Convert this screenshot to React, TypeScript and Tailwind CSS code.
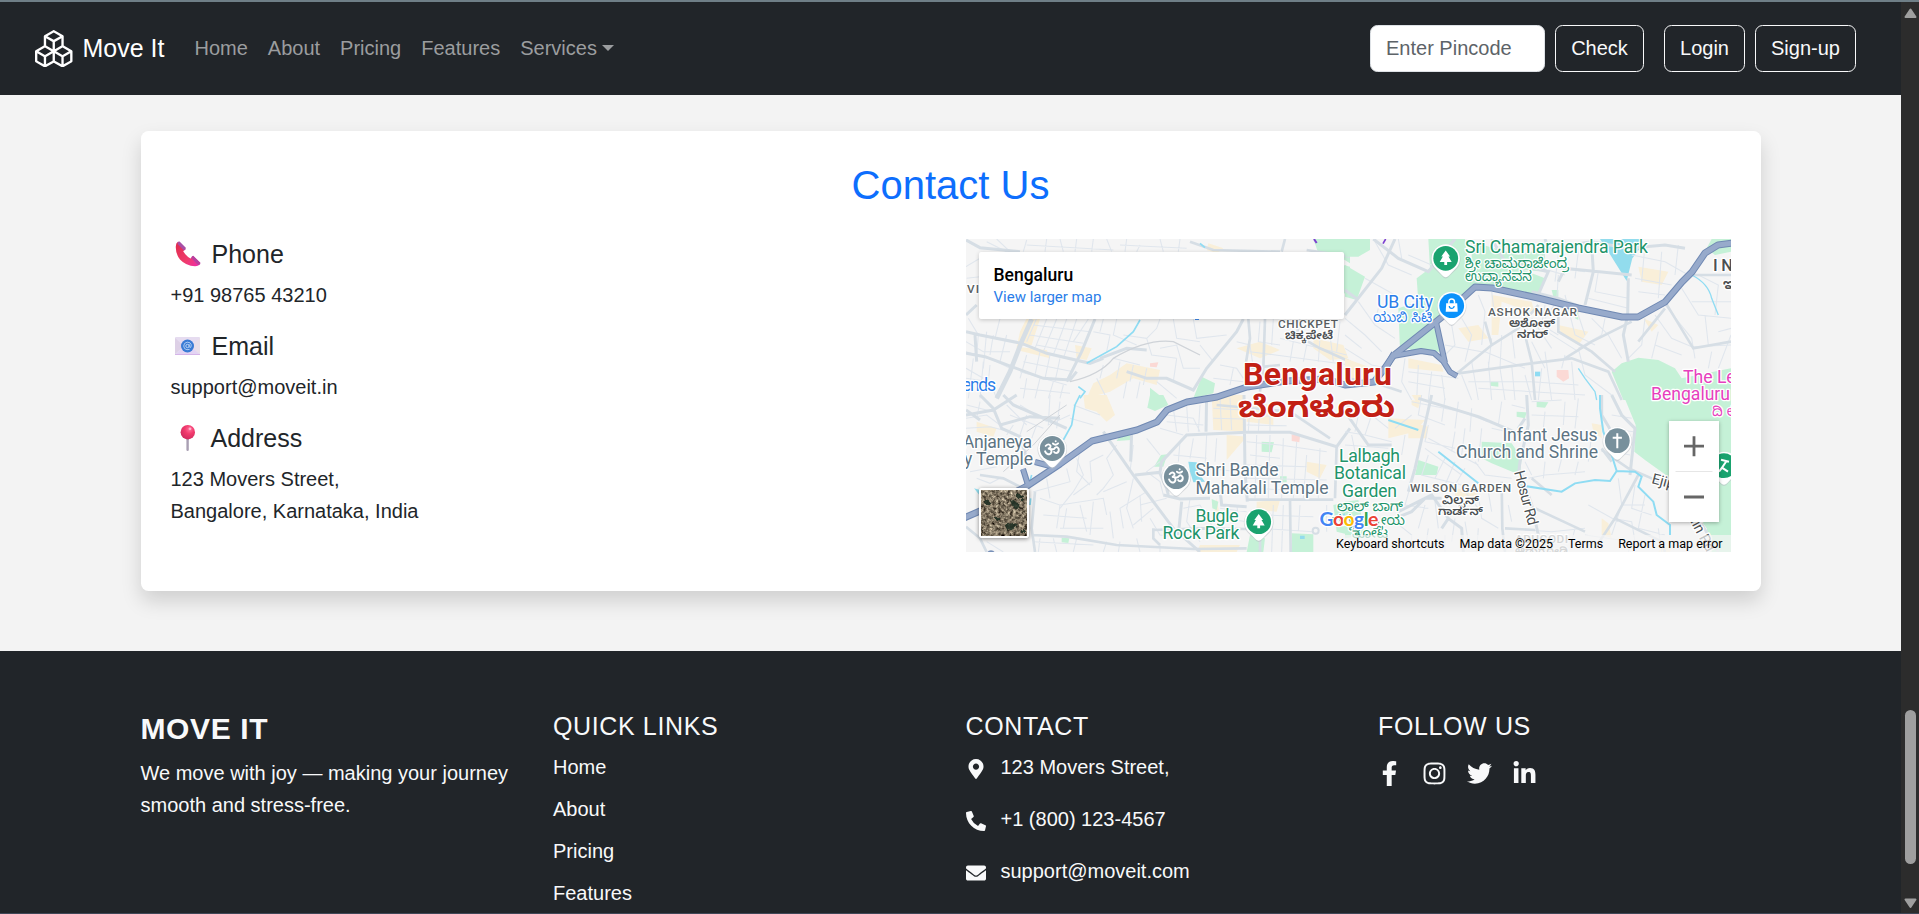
import React from "react";
import { BsBoxes } from "react-icons/bs";
import { FaMapMarkerAlt, FaPhoneAlt, FaEnvelope, FaFacebookF, FaInstagram, FaTwitter, FaLinkedinIn } from "react-icons/fa";

const navLinks = ["Home", "About", "Pricing", "Features"];
const quickLinks = ["Home", "About", "Pricing", "Features"];

const KN = '"Noto Sans Kannada", "Noto Sans", sans-serif';

function NavButton({ children, className = "" }: { children: React.ReactNode; className?: string }) {
  return (
    <button className={`h-[47px] shrink-0 rounded-[7.5px] border border-[#f8f9fa] pb-0.5 text-xl leading-[30px] text-[#f8f9fa] ${className}`}>
      {children}
    </button>
  );
}

function Navbar() {
  return (
    <nav className="flex h-[93px] shrink-0 items-center bg-[#212529] pr-[45px] pl-[35px]">
      <a className="flex items-center text-[25px] leading-10 text-white">
        <BsBoxes className="mr-2.5 size-[37.5px]" />
        <span className="pb-0.5">Move It</span>
      </a>
      <div className="ml-[30px] flex gap-5 pb-0.5 text-xl leading-[30px] text-[#9b9d9f]">
        {navLinks.map((l) => (
          <a key={l}>{l}</a>
        ))}
        <a className="flex items-center">
          Services
          <span className="ml-[5px] border-x-[6px] border-t-[6px] border-x-transparent border-t-[#9b9d9f]" />
        </a>
      </div>
      <div className="ml-auto flex">
        <input
          className="mr-2.5 h-[47px] w-[175px] rounded-[7.5px] border border-[#dee2e6] bg-white px-[15px] text-xl placeholder:text-[#5d6368]"
          placeholder="Enter Pincode"
        />
        <NavButton className="mr-5 w-[89px]">Check</NavButton>
        <NavButton className="mr-2.5 w-[81px]">Login</NavButton>
        <NavButton className="w-[101px]">Sign-up</NavButton>
      </div>
    </nav>
  );
}

function PhoneEmoji() {
  return (
    <svg viewBox="0 0 26 26" className="ml-1 h-[26px] w-[26px]">
      <defs>
        <linearGradient id="ph" x1="0" y1="0" x2="1" y2="1">
          <stop offset="0" stopColor="#e02a4c" />
          <stop offset=".6" stopColor="#ef3c6c" />
          <stop offset="1" stopColor="#f02bb0" />
        </linearGradient>
      </defs>
      <path d="M3 .8 L10.5 8 L8.2 10.3 Q11 15 15.5 17.5 L18 15 L25.3 22 Q24 25.2 20 25.2 Q11 25 5 18.5 Q0.6 13 0.8 6 Q.6 2 3 .8Z" fill="url(#ph)" />
      <path d="M3 .8 L4.6 .6 L10.8 6.8 L10.5 8.6 L9 9.6 L2.6 3Z" fill="#a84fa6" />
      <path d="M17 15.2 L18.3 14.8 L25.4 21.8 L25 23.4 L23 24 L16.2 17Z" fill="#b8409f" />
    </svg>
  );
}

function EmailEmoji() {
  return (
    <svg viewBox="0 0 26 26" className="ml-1 h-[26px] w-[26px]">
      <rect x="0" y="4" width="25" height="18" rx="1" fill="#e6dcf0" />
      <path d="M0 5 L9 13 L0 21Z" fill="#ddd0e6" />
      <path d="M25 5 L16 13 L25 21Z" fill="#eadfe9" />
      <path d="M.5 21.4 L9 14 H16 L24.5 21.4Z" fill="#e3d3f3" />
      <rect x="0" y="21" width="25" height="1" fill="#d5b5e8" />
      <circle cx="12.5" cy="13" r="6.5" fill="#3a7bd5" />
      <circle cx="12.5" cy="13" r="1.7" fill="none" stroke="#b9d2f5" strokeWidth="1" />
      <path d="M14.2 11.2 V13.6 Q14.6 15 15.9 14.2 Q17 11.5 15 9.8 Q12 8.2 9.6 10.4 Q7.8 13 9.6 15.6 Q11.8 17.4 14.6 16.4" fill="none" stroke="#b9d2f5" strokeWidth=".9" />
    </svg>
  );
}

function PinEmoji() {
  return (
    <svg viewBox="0 0 26 26" className="ml-1 h-[26px] w-[26px]">
      <defs>
        <radialGradient id="pin" cx=".62" cy=".3" r=".8">
          <stop offset="0" stopColor="#ff6f9b" />
          <stop offset=".4" stopColor="#f23a6d" />
          <stop offset="1" stopColor="#c9285c" />
        </radialGradient>
      </defs>
      <rect x="11.4" y="13" width="2.4" height="13" rx="1.2" fill="#a99fb3" />
      <circle cx="12.8" cy="7.2" r="7.2" fill="url(#pin)" />
      <circle cx="15" cy="3.8" r="1.4" fill="#ffb3cb" />
    </svg>
  );
}

type LabelProps = {
  x: number;
  y: number;
  w?: number;
  size?: number;
  fill: string;
  weight?: number;
  kn?: boolean;
  rotate?: number;
  children: string;
};

function Label({ x, y, w, size = 17.6, fill, weight = 400, kn, rotate, children }: LabelProps) {
  return (
    <text
      x={x}
      y={y}
      textLength={w}
      lengthAdjust={kn ? "spacingAndGlyphs" : "spacing"}
      fontFamily={kn ? KN : "Roboto, sans-serif"}
      fontSize={size}
      fontWeight={weight}
      fill={fill}
      stroke="#ffffff"
      strokeWidth={2.6}
      strokeLinejoin="round"
      paintOrder="stroke"
      transform={rotate ? `rotate(${rotate} ${x} ${y})` : undefined}
    >
      {children}
    </text>
  );
}

function Pin({ x, y, color, children }: { x: number; y: number; color: string; children?: React.ReactNode }) {
  return (
    <g transform={`translate(${x} ${y})`}>
      <path d="M0 20.3 C-1 20.3 -3 19 -4.5 17 L-9.5 12.2 A14.8 14.8 0 1 1 9.5 12.2 L4.5 17 C3 19 1 20.3 0 20.3Z" fill="#b9bfc4" opacity=".55" />
      <path d="M0 19 C-1 19 -3 18 -4.5 16 L-9.2 11 A14.2 14.2 0 1 1 9.2 11 L4.5 16 C3 18 1 19 0 19Z" fill="#fff" />
      <circle r="12.4" fill={color} />
      {children}
    </g>
  );
}

const Tree = () => (
  <path d="M0 -7.8 L4.4 -1.8 H2.8 L6 3.8 H1.4 V6.6 H-1.4 V3.8 H-6 L-2.8 -1.8 H-4.4Z" fill="#fff" />
);

const Om = () => (
  <g fill="none" stroke="#fff" strokeWidth="1.9" strokeLinecap="round">
    <path d="M-6.6 -2.6 Q-3.5 -5.6 -1.8 -2.8 Q-1.4 -.4 -4.4 0 Q-.4 .2 -.8 3.4 Q-2 6.8 -5 5.4 Q-6.6 4.4 -7.2 2.8" />
    <path d="M-1 .6 Q1.4 1.4 2.6 -.6 Q4.8 -2.6 6.4 .4 Q7 4 4 4.6 Q2.4 4.6 1.8 3.4" />
    <path d="M.6 -5 Q3.2 -2.6 5.8 -5.2" />
    <path d="M3.4 -7.4 v.1" />
  </g>
);

const FINE = "#e0e6ed";
const ROAD = "#d6dee5";
const SAND = "#f9efd9";
const TRUNK =
  "M-2 279 L14 272 L61 247 L94 225 L126 202 L171 191 L191 183 L201 171 L221 163 L251 158 L281 148 L320 142 L360 140 L379 146 L408 143 L419 129 L427 117 L476 78 L509 48 L526 49 L572 59 L612 69 L656 78 L672 78 L699 63 L716 43 L726 33 L739 14 L752 6 L767 4";
const SPURS =
  "M427 117 L455 112 L468 114 L477 122 L484 133 L491 137 M470 83 L479 124 M69 223 L84 227 M57 230 L62 246 M419 131 L428 114";

function CityMap() {
  return (
    <svg viewBox="0 0 765 313" className="block h-[313px] w-[765px]">
      <rect width="765" height="313" fill="#f5f5f5" />

      {/* north-west */}
      <g transform="translate(-6 -4) scale(.33333)">
        <path d="M200 250 L240 252 L215 330 L170 335 L180 290Z M170 335 L260 345 L270 370 L170 345Z M345 330 L395 340 L380 375 L350 370Z M500 385 L600 405 L590 450 L520 430 L450 470 L380 490 L400 445 L450 420Z M745 25 L790 40 L770 55 L740 45Z M1060 310 L1150 330 L1165 370 L1110 375 L1060 340Z M830 340 L900 320 L960 345 L900 370Z" fill={SAND} />
        <path d="M570 385 L595 382 L590 397 L570 395Z" fill="#fbd9d5" />
        <path d="M570 458 L610 490 L570 490Z M725 425 L765 445 L760 475 L700 490Z M1060 12 L1170 12 L1170 85 L1130 60 L1075 55Z M1150 90 L1170 95 L1170 180 L1152 175Z" fill="#c5f1d7" />
        <g fill="none" stroke={FINE} strokeWidth="3.2">
          <path d="M18 95 L60 70 M20 130 L60 125 M80 20 L140 50 M110 12 L150 50 M200 15 L190 50 M260 12 L255 50 M300 12 L310 50 M350 12 L345 50 M400 12 L395 50 M440 12 L455 50 M200 30 L460 45 M500 12 L495 50 M540 30 L530 50 M600 12 L610 50 M660 12 L655 50 M480 30 L680 40" />
          <path d="M18 320 L70 350 L150 350 M18 350 L100 375 L150 400 M18 400 L70 430 M25 250 L55 300 L50 360 M80 290 L70 400 M100 300 L90 360 M120 250 L105 310 M140 300 L120 380 M18 430 L90 440 L110 490 M40 370 L25 490 M70 380 L60 490 M90 390 L85 440" />
          <path d="M230 250 L200 320 M260 252 L225 340 M290 252 L250 350 M320 252 L280 360 M350 252 L310 370 M385 252 L340 320 M220 270 L390 290 M210 300 L370 325 M230 330 L360 355 M200 360 L180 430 M240 350 L225 420 M270 360 L255 430 M300 370 L285 440 M190 380 L340 410 M180 410 L320 450 M200 430 L190 490 M240 430 L225 490 M280 440 L265 490 M310 450 L300 490 M180 460 L330 475" />
          <path d="M400 290 L450 300 L440 350 M430 252 L420 290 M470 252 L460 300 L530 330 M490 300 L560 310 L590 280 L600 252 M560 310 L575 360 L650 370 M640 252 L650 310 L720 320 M600 340 L650 330 L670 400 L720 400 M460 370 L540 390 M430 390 L420 430 M480 380 L470 430 M520 390 L510 440 M560 400 L550 450 M650 370 L640 440 M590 440 L650 490 M720 330 L760 380 M700 252 L710 310 L800 300" />
          <path d="M830 320 L870 330 L880 400 M780 390 L830 400 L850 430 M900 260 L895 320 L960 330 M940 252 L935 330 M1000 320 L990 380 M1040 330 L1030 380 M1080 310 L1075 380 M1110 300 L1120 380 M1140 260 L1130 350 M870 350 L1170 390 M960 310 L1160 360 M760 430 L850 440 M820 400 L810 450 M500 440 L490 490 M540 440 L530 490 M410 430 L440 490" />
        </g>
        <g fill="none" stroke={ROAD} strokeWidth="11">
          <path d="M215 252 L185 320 L150 410 L110 490" strokeWidth="14" />
          <path d="M18 15 L60 38 L130 45 L180 50 M405 252 L365 350 L320 440 M18 290 L60 300 L185 325 L260 355 L390 385 L430 370 M18 355 L75 365 L155 395 L250 430 L330 435 L350 410 M500 410 L560 430 L620 430 L700 465 L740 400 L830 290 L850 252 M45 300 L50 380 M18 240 L50 210 M420 370 L500 340 L560 345" strokeWidth="9" />
          <path d="M690 20 L760 45 L960 50 M975 12 L965 50 M865 252 L870 310 L855 400 M915 252 L910 400 L900 470 M1040 45 L1170 65 M1020 252 L1010 300 L1080 340 L1170 380 M860 400 L960 390" strokeWidth="8" />
        </g>
        <path d="M330 440 Q420 420 460 370 Q560 310 640 320 L720 360" fill="none" stroke="#cfd3d8" strokeWidth="4" />
        <path d="M380 385 L470 335 L520 290 L540 255 M720 25 L735 38 M355 455 L375 470 L360 490" fill="none" stroke="#8fdcf3" strokeWidth="5" />
        <path d="M705 252 h12" stroke="#1a73e8" strokeWidth="5" />
        <path d="M1062 12 L1070 24" stroke="#7b3fd0" strokeWidth="6" />
      </g>

      {/* north-east */}
      <g transform="translate(379 -4) scale(.33333)">
        <path d="M440 180 L560 200 L570 235 L470 200 L460 300 L440 300Z M340 280 L400 270 L430 310 L370 320Z M190 370 L290 390 L295 410 L190 400Z M640 270 L730 290 L700 330 L650 300Z M880 95 L970 110 L950 150 L890 140Z M895 250 L940 270 L920 290Z M0 370 L70 395 L60 440 L0 430Z" fill={SAND} />
        <path d="M215 130 L255 100 L250 12 L360 12 L370 90 L470 80 L600 130 L580 190 L450 160 L390 150 L290 240 L215 340 L165 345 L160 220 L220 200Z M0 12 L75 12 L75 45 L40 65 L0 65Z M0 90 L60 125 L35 195 L0 185Z M265 275 L300 350 L190 350Z M620 165 L640 165 L640 185 L625 185Z M690 220 L700 220 L700 255 L690 250Z M1085 40 L1100 12 L1158 12 L1158 50 L1110 60Z M800 410 L830 385 L880 368 L940 375 L990 400 L1010 430 L1158 400 L1158 495 L835 495Z M380 20 L520 60 L600 40 L600 110 L480 100 L380 90Z M435 440 L460 440 L460 455 L435 452Z" fill="#c5f1d7" />
        <path d="M765 12 L890 12 L885 40 L862 70 L845 138 L815 90 L790 50Z" fill="#92dced" />
        <path d="M635 405 L670 405 L672 430 L655 440 L635 425Z" fill="#fbd9d5" />
        <path d="M570 410 h16 v14 h-16Z" fill="#8fdcf3" />
        <g fill="none" stroke={FINE} strokeWidth="3.2">
          <path d="M0 250 L60 300 L110 350 M40 200 L90 270 L150 310 M0 300 L50 340 M0 340 L80 390 L130 400 M90 20 L130 90 L200 120 M160 12 L170 70 M190 60 L260 90 M20 210 L0 240 M60 130 L150 180 M100 220 L90 260" />
          <path d="M320 270 L330 330 L300 360 M350 250 L380 300 L360 380 M400 180 L420 230 L410 330 M440 170 L450 250 M300 330 L410 350 M440 310 L430 400 M470 300 L465 400 L480 495 M500 290 L510 370 M380 380 L400 495 M420 350 L540 400 M350 420 L380 495 M260 410 L250 495 M290 420 L300 495 M190 410 L340 430 M190 440 L300 460 M370 440 L560 440 M400 460 L560 470 M430 380 L440 495 M500 390 L510 495 M180 370 L170 440 L200 495 M220 390 L215 495" />
          <path d="M540 60 L530 140 M600 40 L590 100 L660 120 M640 60 L630 140 M700 50 L690 130 M560 90 L720 110 M760 110 L750 170 L850 190 M730 190 L850 220 M640 120 L635 200 L600 250 M660 180 L690 300 L750 330 M700 240 L720 300 M600 210 L590 270 L640 300 M560 250 L620 340 M590 280 L700 350 M740 250 L790 300 L830 370 M780 250 L770 300 L700 340 M560 320 L600 400 M600 350 L620 495 M660 360 L650 400 M700 340 L720 420 L800 480 M560 440 L700 450 M560 470 L720 480 M590 400 L580 495 M540 420 L560 495 M680 380 L690 495" />
          <path d="M860 60 L960 80 L1030 120 M900 30 L890 140 M950 50 L940 190 M870 130 L980 150 M880 170 L960 180 M1000 30 L990 120 M930 240 L980 310 L1040 335 L1158 330 M960 210 L1040 310 L1050 370 M900 250 L890 330 L850 370 M1010 160 L1060 240 L1158 250 M1060 120 L1120 150 L1110 240 M1040 200 L1158 200 M1080 240 L1090 330 M1120 290 L1158 280 M930 330 L1010 360 M940 290 L920 370 M1100 350 L1090 400 M1158 300 L1120 400" />
        </g>
        <g fill="none" stroke={ROAD} strokeWidth="9">
          <path d="M0 240 L110 100 L150 12 M0 165 L40 195 M85 12 L160 70 L250 110 L290 60 L330 12 M440 12 L480 80 L610 110 L575 190 M600 12 L610 40 L740 20 L850 40 L960 30 L1020 40 M740 30 L745 110 L720 210 M640 140 L660 100 L860 120 M850 130 L848 240 L835 300 L850 380" />
          <path d="M330 420 L440 330 L520 280 L580 210 M540 300 L560 380 L570 495 M340 415 L560 385 L680 370 L790 410 L830 495 M660 370 L740 320 L860 260 M640 240 L640 290 L740 350 L810 410 M880 320 L960 220 M960 200 L1045 340 L1158 320 M720 220 L640 190 L560 170 M1030 120 L1158 120 M420 260 L440 330 M0 430 L80 440 L170 470" strokeWidth="8" />
        </g>
        <path d="M1040 120 Q1090 145 1100 190 L1120 240 M700 400 L720 430 L750 470 L755 495" fill="none" stroke="#8fdcf3" strokeWidth="4" />
        <path d="M122 12 L114 26" stroke="#7b3fd0" strokeWidth="5" />
      </g>

      {/* south-west */}
      <g transform="translate(-6 156) scale(.33333)">
        <path d="M370 0 L440 0 L465 60 L440 80 L410 50 L375 40Z M755 0 L855 0 L855 110 L760 105Z M800 120 L860 125 L800 195Z M860 20 L940 30 L940 90 L860 80Z M1040 200 L1100 210 L1080 250 L1040 230Z M770 310 L780 370 L760 370Z M890 320 L960 315 L950 350 L890 345Z M720 450 L840 450 L830 471 L710 471Z M50 80 L110 100 L100 125 L50 110Z" fill={SAND} />
        <path d="M570 0 L610 0 L625 30 L585 48 L562 38Z M480 122 L515 120 L512 135 L470 138Z M603 180 L622 178 L610 215 L582 215Z M905 140 L942 142 L935 172 L905 170Z M755 312 L775 320 L770 345 L757 340Z M870 420 L915 430 L910 471 L860 471Z M995 415 L1060 418 L1060 471 L995 471Z M305 428 L328 430 L325 444 L305 442Z M960 244 L980 244 L980 262 L960 262Z M1120 330 L1170 320 L1170 420 L1130 410Z" fill="#c5f1d7" />
        <path d="M685 200 L710 202 L720 240 L735 260 L700 262 L690 230Z M42 280 L60 285 L58 300Z M1020 422 h14 v10 h-14Z" fill="#92dced" />
        <path d="M995 118 L1020 122 L1018 142 L995 138Z" fill="#fbd9d5" />
        <g fill="none" stroke={FINE} strokeWidth="3.2">
          <path d="M18 70 L80 60 L120 90 M18 100 L90 95 L150 110 M60 20 L50 70 M20 30 L100 50 M140 30 L200 90 M150 60 L250 100 M180 30 L260 80 M160 90 L140 120 M200 60 L180 120 M230 90 L215 130 M270 0 L265 90 L330 60 M300 20 L290 100 M340 30 L420 60 M330 70 L400 90 M120 250 L90 265 L50 250 M30 230 L110 215 M220 290 L330 260 L320 220 M260 250 L270 310 M350 190 L370 240 L340 290 L300 340" />
          <path d="M470 150 L440 190 L460 240 L430 280 L410 300 M520 150 L510 230 M560 130 L600 180 M430 180 L390 200 L395 260 L340 300 M360 160 L350 230 L390 270 M300 330 L430 310 L440 360 M320 340 L310 400 M360 330 L380 410 M430 290 L500 260 M520 250 L500 340 L520 400 M560 290 L480 340 L490 400 M400 320 L390 420 M450 350 L460 430 M240 310 L300 330 L290 400 M250 360 L380 370 M300 400 L430 400 M540 300 L545 380 M580 340 L520 390" />
          <path d="M620 60 L700 70 L720 110 M640 40 L650 110 M680 30 L685 110 M620 80 L730 90 M600 100 L670 120 M720 30 L715 110 M760 40 L850 45 M760 70 L850 72 M780 10 L785 105 M810 10 L815 105 M870 20 L865 110 M900 30 L895 110 M930 30 L930 110 M860 60 L960 65 M860 90 L980 92 M700 130 L690 190 M740 120 L735 220 L840 230 M770 130 L765 200 M640 180 L740 190 M660 140 L655 200 M860 140 L960 150 L1100 170 M870 180 L960 190 M890 120 L885 310 M930 120 L925 310 M970 130 L965 310 M1010 140 L1000 310 M860 210 L1040 215 M860 250 L1100 255 M860 280 L990 285 M1040 180 L1030 310 M1080 160 L1075 310" />
          <path d="M600 200 L560 230 L600 260 L610 300 M620 310 L540 330 M670 340 L720 330 L760 400 M690 310 L680 380 L720 440 M780 340 L860 350 M790 370 L860 380 M830 330 L835 360 M570 370 L600 420 L700 430 M440 440 L430 471 M480 440 L475 471 M530 430 L540 471 M600 450 L600 471 M940 330 L935 471 M970 330 L965 471 M900 400 L1060 410 M900 360 L1060 365 M1020 330 L1015 410 M1100 330 L1100 410 M240 430 L235 471 M280 430 L290 471 M350 430 L340 471 M220 440 L400 450 M80 440 L130 471" />
        </g>
        <g fill="none" stroke={ROAD} strokeWidth="9">
          <path d="M60 0 L100 40 L125 100 L180 125 L200 190 M18 60 L100 45 L170 0 M18 45 L60 75 M120 90 L210 65 L300 70 M130 0 L160 30 L230 60 L320 100 M430 110 L520 240 L640 400 L720 471 M515 110 L512 200 M525 240 L600 232 L605 200 L680 120 L860 112 L990 112 L1130 155 L1170 100 M600 235 L620 280 L625 300 M665 320 L655 420 M610 300 L660 312 L750 310 M740 0 L738 110 M852 0 L855 230 L862 320 M780 280 L785 330 L860 335" />
          <path d="M862 314 L1120 314 M990 310 L992 471 M580 405 L730 400 L860 402 M18 395 L60 430 L80 471 M225 290 L215 400 L225 471 M215 420 L320 425 L470 450 L700 462 L860 460 M580 400 L580 430 L600 450 M1130 150 L1125 310 M770 30 L990 50 L1110 130 M900 380 L900 471 M60 240 L130 250 L180 275" strokeWidth="8" />
        </g>
        <path d="M360 0 L345 30 L335 90 L310 135 M215 240 L205 275 M212 310 L210 330 M1130 370 L1170 350" fill="none" stroke="#8fdcf3" strokeWidth="5" />
        <path d="M300 60 L220 150 L130 230 M200 110 L320 30" fill="none" stroke="#cfd3d8" strokeWidth="3" />
        <circle cx="1067" cy="407" r="9" fill="none" stroke={ROAD} strokeWidth="6" />
        <circle cx="93" cy="478" r="12" fill="#7890b8" />
      </g>

      {/* south-east */}
      <g transform="translate(379 156) scale(.33333)">
        <path d="M190 80 L250 95 L245 130 L190 130Z M130 70 L240 75 L210 110 L130 130Z M200 15 L225 20 L220 40 L200 30Z M740 85 L770 90 L770 130 L745 110Z M770 370 L790 385 L800 430 L770 420Z M330 280 L400 290 L390 320 L330 310Z M200 0 L230 0 L220 30Z M950 455 L980 455 L975 471 L940 471Z" fill={SAND} />
        <path d="M835 0 L1158 0 L1158 471 L1100 471 L1085 400 L970 245 L900 195 L868 170 L872 90Z M515 50 L545 52 L540 70 L515 65Z M575 20 L610 22 L600 38 L575 36Z M410 140 L500 145 L530 190 L525 240 L440 205 L410 190Z M220 195 L280 215 L275 240 L210 240Z M0 320 L40 315 L60 420 L0 430Z" fill="#c5f1d7" />
        <g fill="none" stroke={FINE} strokeWidth="3.2">
          <path d="M200 20 L350 50 L430 80 M230 0 L220 60 L300 90 M300 10 L290 80 M340 20 L330 100 M380 40 L375 110 M200 60 L150 100 M250 90 L240 140 L330 160 M330 110 L320 170 M360 100 L350 180 M410 100 L400 200 M440 100 L530 120 M470 20 L460 90 M500 30 L540 40 M250 130 L400 210 M240 160 L350 240 M300 190 L270 250 M330 200 L300 270 M360 220 L330 270 M250 180 L230 240 L350 270 M390 200 L420 240 L500 250" />
          <path d="M560 60 L700 65 M600 50 L595 100 M660 20 L655 90 M700 10 L690 100 M560 20 L650 15 M550 250 L600 240 L720 230 M600 200 L595 250 M650 190 L640 230 M700 200 L690 240 M740 120 L730 200 M540 200 L560 240 M800 60 L860 70 M790 100 L865 110 M810 170 L855 180 M0 30 L80 60 L60 120 L0 110 M80 60 L130 100 M20 120 L30 170 L120 180 M60 120 L140 140 M0 150 L130 160 M180 120 L170 180 M40 60 L30 110" />
          <path d="M200 260 L180 330 L250 340 M240 330 L220 400 M270 320 L280 400 M330 370 L320 440 M400 300 L410 370 L460 400 M430 290 L440 350 M360 290 L400 340 M150 380 L200 420 L200 471 M250 400 L240 471 M300 420 L300 471 M360 380 L370 440 M400 400 L395 471 M480 400 L620 410 L720 400 M500 380 L490 330 M820 250 L830 330 L800 420 M870 270 L860 340 L920 360 M830 330 L900 330 M800 370 L860 380 L870 440 M900 300 L880 400 L960 420 M940 400 L950 471 M720 420 L860 440 M730 330 L820 380 M690 400 L680 440 M860 440 L850 471" />
        </g>
        <g fill="none" stroke={ROAD} strokeWidth="9">
          <path d="M220 10 L400 65 L530 120 M260 0 L210 220 L190 290 M545 0 L550 90 L525 200 L520 240 M770 0 L770 60 L800 110 M800 0 L830 60 L870 100 L855 240 M540 70 L520 100 M0 50 L70 150 L140 150 M150 370 L200 350 L240 310 L290 310 M160 350 L260 300 L310 370 L350 400 L355 471 M290 400 L310 370 M530 240 L560 330 L580 420" />
          <path d="M770 165 L850 220 L920 250 L1000 300 L1060 370 L1120 471 M880 240 L810 370 L750 460 M810 370 L950 440 L960 471 M470 260 L472 400 L480 471 M480 400 L570 405 M570 340 L720 410 M800 200 L770 160 M620 300 L560 250" strokeWidth="8" />
        </g>
        <path d="M280 170 L400 265 M520 270 L650 290 L690 265 L750 255 L795 258 L815 228 L870 230 L890 245 L880 275 L925 320 L935 360 L975 390 L975 420 M765 0 L765 40 L775 110 L800 180 L815 228 M130 75 L220 105" fill="none" stroke="#8fdcf3" strokeWidth="6" />
      </g>

      {/* trunk road */}
      <g fill="none" strokeLinejoin="round" strokeLinecap="butt">
        <path d={TRUNK} stroke="#7089b3" strokeWidth="7" />
        <path d={SPURS} stroke="#7089b3" strokeWidth="6" />
        <path d={TRUNK} stroke="#97aacb" strokeWidth="5" />
        <path d={SPURS} stroke="#97aacb" strokeWidth="4" />
      </g>

      {/* labels */}
      <Label x={499} y={14} w={183} fill="#21946a">Sri Chamarajendra Park</Label>
      <Label x={499} y={29} w={104} size={14} fill="#21946a" kn>ಶ್ರೀ ಚಾಮರಾಜೇಂದ್ರ</Label>
      <Label x={499} y={42} w={67} size={14} fill="#21946a" kn>ಉದ್ಯಾನವನ</Label>
      <Label x={411} y={68.7} w={56} fill="#2a7de9">UB City</Label>
      <Label x={407} y={82.5} w={59} size={14} fill="#2a7de9" kn>ಯುಬಿ ಸಿಟಿ</Label>
      <Label x={522} y={76.7} w={89} size={11.8} weight={500} fill="#5a5f63">ASHOK NAGAR</Label>
      <Label x={543} y={88} w={46} size={11.5} weight={600} fill="#4b4f52" kn>ಅಶೋಕ್</Label>
      <Label x={551} y={99} w={31} size={11.5} weight={600} fill="#4b4f52" kn>ನಗರ್</Label>
      <Label x={747} y={32} w={20} size={16.5} weight={500} fill="#4b4f52">IN</Label>
      <Label x={757} y={50} size={14} weight={600} fill="#4b4f52" kn>ಇಂ</Label>
      <Label x={312} y={88.7} w={60} size={11.8} weight={500} fill="#5a5f63">CHICKPET</Label>
      <Label x={319} y={100} w={48} size={11.5} weight={600} fill="#4b4f52" kn>ಚಿಕ್ಕಪೇಟೆ</Label>
      <Label x={1} y={54} w={12} size={11.8} weight={500} fill="#5a5f63">VI</Label>
      <Label x={-4} y={152} w={34} fill="#2a7de9">ends</Label>
      <Label x={277} y={146} w={149} size={32} weight={700} fill="#c22015">Bengaluru</Label>
      <Label x={272} y={177.5} w={157} size={29} weight={700} fill="#c22015" kn>ಬೆಂಗಳೂರು</Label>
      <Label x={717} y={144} fill="#e640bd">The Leela</Label>
      <Label x={685} y={161} w={79} fill="#e640bd">Bengaluru</Label>
      <Label x={746} y={176.6} size={14} fill="#e640bd" kn>ದಿ ಲೀ</Label>
      <Label x={-3} y={209} w={69} fill="#5d7483">Anjaneya</Label>
      <Label x={-2} y={226} w={69} fill="#5d7483">y Temple</Label>
      <Label x={229.5} y={237} w={83} fill="#5d7483">Shri Bande</Label>
      <Label x={229.5} y={254.5} w={133} fill="#5d7483">Mahakali Temple</Label>
      <Label x={229.5} y={282.7} w={43} fill="#21946a">Bugle</Label>
      <Label x={196.5} y={300} w={77} fill="#21946a">Rock Park</Label>
      <Label x={373} y={222.7} w={61} fill="#21946a">Lalbagh</Label>
      <Label x={368} y={240} w={72} fill="#21946a">Botanical</Label>
      <Label x={376} y={257.7} w={55} fill="#21946a">Garden</Label>
      <Label x={371} y={272} w={66} size={13.5} fill="#21946a" kn>ಲಾಲ್ ಬಾಗ್</Label>
      <Label x={366} y={286} w={73} size={13.5} fill="#21946a" kn>ಸಸ್ಯಶಾಸ್ತ್ರೀಯ</Label>
      <Label x={386} y={299} w={36} size={13.5} fill="#21946a" kn>ತೋಟ</Label>
      <Label x={444} y={253} w={101} size={11.8} weight={500} fill="#5a5f63">WILSON GARDEN</Label>
      <Label x={476} y={265} w={37} size={11.5} weight={600} fill="#4b4f52" kn>ವಿಲ್ಸನ್</Label>
      <Label x={472} y={276} w={45} size={11.5} weight={600} fill="#4b4f52" kn>ಗಾರ್ಡನ್</Label>
      <Label x={536.5} y={201.7} w={95} fill="#5d7483">Infant Jesus</Label>
      <Label x={490} y={219} w={142} fill="#5d7483">Church and Shrine</Label>
      <Label x={548} y={233} w={56} size={15} fill="#4b4f52" rotate={75}>Hosur Rd</Label>
      <Label x={685} y={244} size={14.5} fill="#4b4f52" rotate={15}>Ejipura</Label>
      <Label x={716} y={267} size={14.5} fill="#4b4f52" rotate={62}>Main Rd</Label>
      <Label x={549} y={304} w={53} size={11.8} weight={500} fill="#8b8f92">ADUGODI</Label>
      <Label x={549} y={316} w={53} size={11.5} weight={600} fill="#8b8f92" kn>ಆಡುಗೋಡಿ</Label>

      {/* pins */}
      <Pin x={479.7} y={19.3} color="#1aa36f"><Tree /></Pin>
      <Pin x={292.7} y={282.7} color="#1aa36f"><Tree /></Pin>
      <Pin x={758} y={226.7} color="#1aa36f">
        <path d="M-3 -6 L5 -4 M2 -4 L-2 2 L4 6 M-2 2 L-5 6" stroke="#fff" strokeWidth="2" fill="none" />
      </Pin>
      <Pin x={485.7} y={66.7} color="#0a92fb">
        <path d="M-5.5 -2.5 H5.5 L6 6 H-6Z" fill="#fff" />
        <path d="M-2.8 -2 V-4 A2.8 2.8 0 0 1 2.8 -4 V-2" fill="none" stroke="#fff" strokeWidth="1.5" />
        <path d="M-2.4 .2 A2.4 2.4 0 0 0 2.4 .2" fill="none" stroke="#0a92fb" strokeWidth="1.3" />
      </Pin>
      <Pin x={86.3} y={209.5} color="#78909c"><Om /></Pin>
      <Pin x={210.3} y={237.7} color="#78909c"><Om /></Pin>
      <Pin x={651.3} y={201.7} color="#78909c">
        <path d="M0 -7.5 V7.5 M-4.6 -3 H4.6" stroke="#fff" strokeWidth="2" />
      </Pin>

      <text x="353.5" y="287" textLength="59" fontFamily="Lato, sans-serif" fontSize="19.5" fontWeight="700" stroke="#fff" strokeWidth="2.5" paintOrder="stroke" strokeLinejoin="round">
        <tspan fill="#4285f4">G</tspan>
        <tspan fill="#ea4335">o</tspan>
        <tspan fill="#fbbc05">o</tspan>
        <tspan fill="#4285f4">g</tspan>
        <tspan fill="#34a853">l</tspan>
        <tspan fill="#ea4335">e</tspan>
      </text>
    </svg>
  );
}

function Satellite() {
  return (
    <svg viewBox="0 0 46 46" className="block size-full">
      <defs>
        <filter id="ground" x="0" y="0" width="100%" height="100%" colorInterpolationFilters="sRGB">
          <feTurbulence type="fractalNoise" baseFrequency=".34" numOctaves="4" seed="7" />
          <feColorMatrix values="1 .5 0 0 -.25  .95 .5 0 0 -.27  .85 .45 0 0 -.27  0 0 0 0 1" />
        </filter>
        <filter id="soft" x="-20%" y="-20%" width="140%" height="140%">
          <feTurbulence type="fractalNoise" baseFrequency=".2" numOctaves="2" seed="3" />
          <feDisplacementMap in="SourceGraphic" scale="7" />
          <feGaussianBlur stdDeviation=".6" />
        </filter>
      </defs>
      <rect width="46" height="46" filter="url(#ground)" />
      <g fill="#1f2f22" opacity=".85" filter="url(#soft)">
        <path d="M29 10 L37 13 L38 20 L32 18Z M36 5 h6 v4 h-6Z M24 35 L35 32 L36 37 L27 42Z M40 40 h5 v4 h-5Z M5 11 h4 v4 h-4Z M14 26 h4 v3 h-4Z" />
      </g>
    </svg>
  );
}

function MapEmbed() {
  return (
    <div className="relative h-[313px] w-[765px] overflow-hidden font-[Roboto,sans-serif]">
      <CityMap />
      <div className="absolute top-[13px] left-[13px] h-[67px] w-[365px] rounded-[2px] bg-white px-[15px] pt-[13px] shadow-[0_1px_4px_rgba(0,0,0,0.2)]">
        <div className="text-[17.5px] leading-5 font-medium text-black">Bengaluru</div>
        <div className="mt-0.5 text-[15px] leading-5 text-[#2a7de9]">View larger map</div>
      </div>
      <div className="absolute top-[249px] left-[13px] size-[50px] rounded-[3px] border-2 border-white shadow-[0_1px_4px_rgba(0,0,0,0.45)]">
        <Satellite />
      </div>
      <div className="absolute top-[182px] left-[703px] h-[101px] w-[50px] bg-white shadow-[0_1px_4px_rgba(0,0,0,0.3)]">
        <svg viewBox="0 0 50 101" className="block size-full">
          <path d="M15 25.2 H35 M25 15.2 V35.2 M15 76 H35" stroke="#666" strokeWidth="2.8" />
          <path d="M6.5 50.5 H43.5" stroke="#e6e6e6" />
        </svg>
      </div>
      <div className="absolute right-0 bottom-0 flex h-[17.5px] items-center justify-end gap-[15px] bg-[#f5f5f5]/70 pr-2 pl-[7px] text-[12.5px] leading-[17px] whitespace-nowrap text-black">
        <span>Keyboard shortcuts</span>
        <span>Map data ©2025</span>
        <span>Terms</span>
        <span>Report a map error</span>
      </div>
    </div>
  );
}

function ContactBlock({ icon, title, children, className = "" }: { icon: React.ReactNode; title: string; children: React.ReactNode; className?: string }) {
  return (
    <div className="mb-5">
      <h5 className="mb-2.5 flex h-[30px] items-center text-[25px] leading-[30px]">
        {icon}
        <span className={className}>{title}</span>
      </h5>
      <p className="text-xl leading-8">{children}</p>
    </div>
  );
}

function ContactCard() {
  return (
    <main className="flex h-[556px] shrink-0 flex-col bg-[#f3f3f3] px-[140.5px] pt-9">
      <section className="h-[460px] w-[1620px] rounded-[7.5px] bg-white p-[30px] text-[#212529] shadow-[0_10px_20px_rgba(0,0,0,0.15)]">
        <h2 className="mb-[30px] text-center text-[40px] leading-[48px] text-[#0d6efd]">Contact Us</h2>
        <div className="flex justify-between">
          <div>
            <ContactBlock icon={<PhoneEmoji />} title="Phone" className="ml-[11px]">+91 98765 43210</ContactBlock>
            <ContactBlock icon={<EmailEmoji />} title="Email" className="ml-[11px]">support@moveit.in</ContactBlock>
            <ContactBlock icon={<PinEmoji />} title="Address" className="ml-[10px]">
              123 Movers Street,
              <br />
              Bangalore, Karnataka, India
            </ContactBlock>
          </div>
          <MapEmbed />
        </div>
      </section>
    </main>
  );
}

const contactRows = [
  { Icon: FaMapMarkerAlt, text: "123 Movers Street," },
  { Icon: FaPhoneAlt, text: "+1 (800) 123-4567" },
  { Icon: FaEnvelope, text: "support@moveit.com" },
];

function Footer() {
  return (
    <footer className="grid min-h-0 flex-1 grid-cols-[repeat(4,412.5px)] overflow-hidden bg-[#212529] pt-[60px] pl-[140.5px] text-xl leading-8 text-[#f8f9fa]">
      <div>
        <h4 className="mb-2.5 text-[30px] leading-9 font-bold tracking-[0.625px]">MOVE IT</h4>
        <p className="w-[382px]">We move with joy — making your journey smooth and stress-free.</p>
      </div>
      <div>
        <h5 className="mb-2.5 text-[25px] leading-[30px] tracking-[0.625px]">QUICK LINKS</h5>
        <ul>
          {quickLinks.map((l) => (
            <li key={l} className="mb-2.5">{l}</li>
          ))}
        </ul>
      </div>
      <div>
        <h5 className="mb-2.5 text-[25px] leading-[30px] tracking-[0.625px]">CONTACT</h5>
        <ul>
          {contactRows.map(({ Icon, text }) => (
            <li key={text} className="mb-5 flex h-8">
              <Icon className="mt-2 mr-[15px] size-5" />
              {text}
            </li>
          ))}
        </ul>
      </div>
      <div>
        <h5 className="mb-2.5 text-[25px] leading-[30px] tracking-[0.625px]">FOLLOW US</h5>
        <div className="-ml-px flex gap-5 pt-2.5">
          <FaFacebookF className="size-[25px]" />
          <FaInstagram className="size-[25px]" />
          <FaTwitter className="size-[25px]" />
          <FaLinkedinIn className="size-[25px]" />
        </div>
      </div>
    </footer>
  );
}

function Scrollbar() {
  return (
    <div className="flex w-[18px] shrink-0 flex-col items-center justify-between bg-[#2c2c2c] pt-[6px] pb-1">
      <svg viewBox="0 0 13 11" className="h-[11px] w-[13px]">
        <path d="M6.5 1.5 L11.5 9 H1.5Z" fill="#9f9f9f" stroke="#9f9f9f" strokeWidth="2" strokeLinejoin="round" />
      </svg>
      <div className="mt-[691px] h-[154px] w-[11px] rounded-full bg-[#9f9f9f]" />
      <svg viewBox="0 0 13 11" className="mt-auto h-[11px] w-[13px]">
        <path d="M6.5 9 L11.5 1.5 H1.5Z" fill="#9f9f9f" stroke="#9f9f9f" strokeWidth="2" strokeLinejoin="round" />
      </svg>
    </div>
  );
}

export default function App() {
  return (
    <div className="flex h-[914px] w-[1919px] flex-col overflow-hidden border-t-2 border-b border-t-[#6f7f87] border-b-[#3f4757] bg-[#212529] font-['Liberation_Sans',Arial,sans-serif]">
      <div className="flex min-h-0 flex-1">
        <div className="flex w-[1901px] shrink-0 flex-col">
          <Navbar />
          <ContactCard />
          <Footer />
        </div>
        <Scrollbar />
      </div>
    </div>
  );
}
